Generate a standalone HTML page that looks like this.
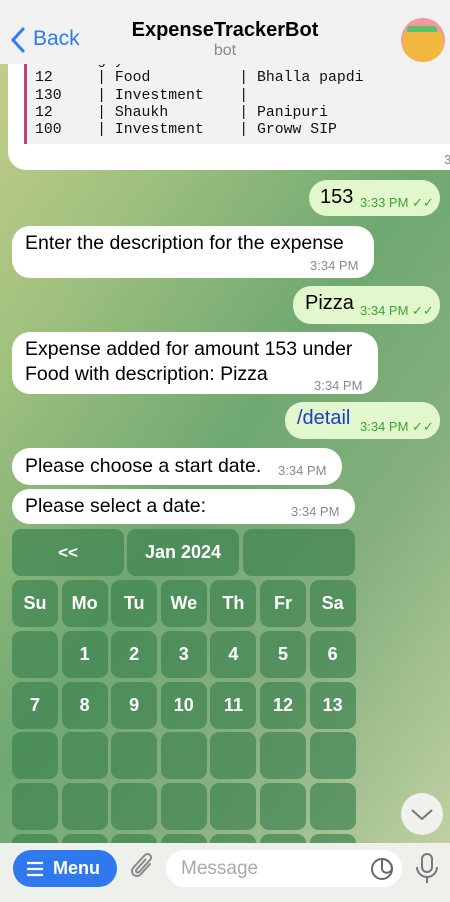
<!DOCTYPE html>
<html><head><meta charset="utf-8"><style>
*{margin:0;padding:0;box-sizing:border-box}
body{width:450px;height:902px;overflow:hidden;position:relative;font-family:"Liberation Sans",sans-serif;
background:linear-gradient(125deg,#c9d08c 0%,#9fc07e 25%,#6fa872 50%,#86b07e 70%,#c8d5a8 100%);}
.hdr{position:absolute;left:0;top:0;width:450px;height:64px;background:#f1f1f1;}
.b{position:absolute;background:#fff;border-radius:18px;font-size:19.5px;color:#000;white-space:nowrap}
.o{background:#e2f7cb}
.t{position:absolute;font-size:13px;color:#8a8a8a}
.ot{color:#3aa43a}
.cal{position:absolute;background:rgba(60,130,80,.68);border-radius:9px;color:#fff;font-weight:bold;font-size:18px;display:flex;align-items:center;justify-content:center}
.mono{font-family:"Liberation Mono",monospace;font-size:14.8px;line-height:17.3px;white-space:pre;color:#111}
</style></head><body>
<div class="b" style="left:8px;top:58px;width:460px;height:112px;border-radius:0 0 0 18px"></div>
<div style="position:absolute;left:24px;top:58px;width:440px;height:86px;background:#f2f2f2;border-left:3px solid #c0407a"></div>
<div class="mono" style="position:absolute;left:35px;top:53px">dekhne gaya tha
12     | Food          | Bhalla papdi
130    | Investment    |
12     | Shaukh        | Panipuri
100    | Investment    | Groww SIP</div>
<div class="t" style="left:444px;top:152px">3</div>
<div class="hdr"></div>
<svg style="position:absolute;left:10px;top:27px" width="16" height="26"><path d="M13 2L3 13l10 11" stroke="#2a7bf4" stroke-width="3" fill="none" stroke-linecap="round"/></svg>
<div style="position:absolute;left:33px;top:27px;font-size:21px;color:#2a7bf4">Back</div>
<div style="position:absolute;left:0;width:450px;text-align:center;top:19px;font-size:20px;font-weight:bold">ExpenseTrackerBot</div>
<div style="position:absolute;left:0;width:450px;text-align:center;top:42px;font-size:16px;color:#8a8a8a">bot</div>
<div style="position:absolute;left:401px;top:18px;width:44px;height:44px;border-radius:50%;background:#ee9aa0;overflow:hidden"><div style="position:absolute;left:6px;top:8px;width:30px;height:8px;background:#5cbf6a;border-radius:3px"></div><div style="position:absolute;left:2px;top:14px;width:40px;height:30px;background:#f2b73e;border-radius:4px"></div></div>

<div class="b o" style="left:309px;top:180px;width:131px;height:36px"><span style="position:absolute;left:11px;top:6px;font-size:20px">153</span><span class="t ot" style="left:51px;top:15px">3:33 PM ✓✓</span></div>
<div class="b" style="left:12px;top:226px;width:362px;height:52px"><span style="position:absolute;left:13px;top:6px">Enter the description for the expense</span><span class="t" style="left:298px;top:32px">3:34 PM</span></div>
<div class="b o" style="left:293px;top:286px;width:147px;height:38px"><span style="position:absolute;left:12px;top:6px;font-size:20px">Pizza</span><span class="t ot" style="left:67px;top:17px">3:34 PM ✓✓</span></div>
<div class="b" style="left:12px;top:332px;width:366px;height:62px;line-height:25px"><span style="position:absolute;left:13px;top:5px">Expense added for amount 153 under<br>Food with description: Pizza</span><span class="t" style="left:302px;top:41px">3:34 PM</span></div>
<div class="b o" style="left:285px;top:402px;width:155px;height:37px"><span style="position:absolute;left:12px;top:5px;font-size:20px;color:#1a3fc4">/detail</span><span class="t ot" style="left:75px;top:17px">3:34 PM ✓✓</span></div>
<div class="b" style="left:12px;top:448px;width:330px;height:37px"><span style="position:absolute;left:13px;top:7px">Please choose a start date.</span><span class="t" style="left:266px;top:15px">3:34 PM</span></div>
<div class="b" style="left:12px;top:489px;width:343px;height:35px"><span style="position:absolute;left:13px;top:6px">Please select a date:</span><span class="t" style="left:279px;top:15px">3:34 PM</span></div>

<div class="cal" style="left:12px;top:529px;width:112px;height:47px;font-size:17px">&lt;&lt;</div>
<div class="cal" style="left:127px;top:529px;width:112px;height:47px">Jan 2024</div>
<div class="cal" style="left:243px;top:529px;width:112px;height:47px"></div>
<div id="g"></div>
<script>
var rows=[["Su","Mo","Tu","We","Th","Fr","Sa"],["","1","2","3","4","5","6"],["7","8","9","10","11","12","13"],["","","","","","",""],["","","","","","",""],["","","","","","",""]];
var h="";for(var r=0;r<6;r++)for(var c=0;c<7;c++){h+='<div class="cal" style="left:'+(12+c*49.6)+'px;top:'+(580+r*50.8)+'px;width:46px;height:47px">'+rows[r][c]+'</div>';}
document.getElementById("g").innerHTML=h;
</script>
<div style="position:absolute;left:401px;top:793px;width:42px;height:42px;border-radius:50%;background:#f0f0ec"></div>
<svg style="position:absolute;left:410px;top:806px" width="24" height="16"><path d="M2 4l10 9 10-9" stroke="#777" stroke-width="2" fill="none"/></svg>

<div style="position:absolute;left:0;top:843px;width:450px;height:59px;background:#eef0ec"></div>
<div style="position:absolute;left:13px;top:850px;width:104px;height:37px;border-radius:19px;background:#2f78ee;color:#fff;font-weight:bold;font-size:18px"><svg style="position:absolute;left:13px;top:11px" width="18" height="16"><path d="M1 2h16M1 8h16M1 14h16" stroke="#fff" stroke-width="2.2"/></svg><span style="position:absolute;left:40px;top:8px">Menu</span></div>
<svg style="position:absolute;left:128px;top:852px" width="28" height="32"><path d="M22 12l-10 11a5 5 0 0 1-7-7l12-13a3.3 3.3 0 0 1 5 5l-11 12a1.6 1.6 0 0 1-2.5-2.5l9-10" stroke="#888" stroke-width="2" fill="none" stroke-linecap="round"/></svg>
<div style="position:absolute;left:166px;top:850px;width:236px;height:37px;border-radius:19px;background:#fff"><span style="position:absolute;left:15px;top:8px;font-size:19px;color:#aaa">Message</span><svg style="position:absolute;left:204px;top:7px" width="24" height="24"><circle cx="12" cy="12" r="10" stroke="#666" stroke-width="2" fill="none"/><path d="M12 2a10 10 0 0 1 10 10c-2 5-9 5-10 0z" stroke="#666" stroke-width="2" fill="none"/></svg></div>
<svg style="position:absolute;left:414px;top:852px" width="26" height="34"><rect x="8" y="2" width="10" height="18" rx="5" stroke="#777" stroke-width="2" fill="none"/><path d="M3 15a10 10 0 0 0 20 0M13 25v6" stroke="#777" stroke-width="2" fill="none"/></svg>
</body></html>
